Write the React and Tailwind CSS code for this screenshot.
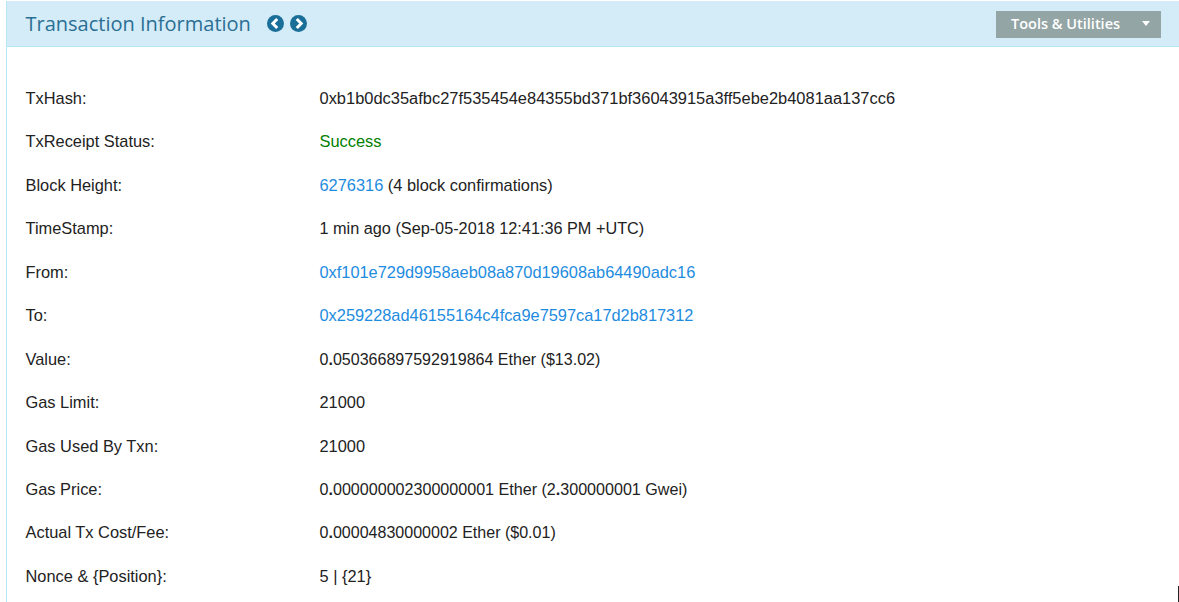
import React from 'react';

const ROWS = [
  { label: 'TxHash:', value: <span className="text-[16.45px]">0xb1b0dc35afbc27f535454e84355bd371bf36043915a3ff5ebe2b4081aa137cc6</span> },
  { label: 'TxReceipt Status:', value: <span className="text-[#008000]">Success</span> },
  { label: 'Block Height:', value: <><span className="text-[#1e8ce0]">6276316</span> (4 block confirmations)</> },
  { label: 'TimeStamp:', value: <span className="text-[16.25px]">1 min ago (Sep-05-2018 12:41:36 PM +UTC)</span> },
  { label: 'From:', value: <span className="text-[16.37px] text-[#1e8ce0]">0xf101e729d9958aeb08a870d19608ab64490adc16</span> },
  { label: 'To:', value: <span className="text-[16.37px] text-[#1e8ce0]">0x259228ad46155164c4fca9e7597ca17d2b817312</span> },
  { label: 'Value:', value: <span className="text-[16.05px]">0<b>.</b>050366897592919864 Ether ($13.02)</span> },
  { label: 'Gas Limit:', value: '21000' },
  { label: 'Gas Used By Txn:', value: '21000' },
  { label: 'Gas Price:', value: <span className="text-[16.1px]">0<b>.</b>000000002300000001 Ether (2<b>.</b>300000001 Gwei)</span> },
  { label: 'Actual Tx Cost/Fee:', value: <span className="text-[16.05px]">0<b>.</b>00004830000002 Ether ($0.01)</span> },
  { label: 'Nonce & {Position}:', value: '5 | {21}' },
];

function ArrowIcon({ dir }) {
  return (
    <svg width="17" height="17" viewBox="0 0 17 17">
      <circle cx="8.5" cy="8.5" r="8.5" fill="#1a6f99" />
      <path
        d={dir === 'left' ? 'M10.2 4 5.8 8.5l4.4 4.5' : 'M6.8 4l4.4 4.5L6.8 13'}
        fill="none"
        stroke="#ffffff"
        strokeWidth="3"
      />
    </svg>
  );
}

export default function App() {
  return (
    <div className="relative h-[602px] w-[1179px] overflow-hidden bg-white pt-px font-['Liberation_Sans',sans-serif]">
      <div className="h-full border-l border-[#b4e6f5] ml-[6px]">
        {/* Header */}
        <div className="flex h-[46px] items-center justify-between border-b border-[#b4e6f5] bg-[#d4ebf8] pl-[18.5px] pr-[18px]">
          <div className="flex items-center">
            <h1 className="font-['Open_Sans',sans-serif] text-[20px] leading-none text-[#2a6f94]">Transaction Information</h1>
            <div className="ml-[16.5px] flex gap-[6px]">
              <ArrowIcon dir="left" />
              <ArrowIcon dir="right" />
            </div>
          </div>
          <button className="mt-[1px] flex h-[27px] w-[165px] items-center justify-between bg-[#93a5a5] pb-px pl-[15px] pr-[11px] font-['Open_Sans',sans-serif] text-[14.5px] font-semibold text-white">
            Tools &amp; Utilities
            <span className="h-0 w-0 border-x-[4.5px] border-t-[5px] border-x-transparent border-t-white" />
          </button>
        </div>

        {/* Rows */}
        <div className="pl-[18.5px] pt-[29.6px]">
          {ROWS.map((row) => (
            <div key={row.label} className="flex h-[43.45px] items-center text-[16.4px] text-[#222222]">
              <div className="w-[294px]">{row.label}</div>
              <div>{row.value}</div>
            </div>
          ))}
        </div>
      </div>
      {/* sliver of scrollbar at the bottom right corner */}
      <div className="absolute bottom-0 right-0 h-[16px] w-px bg-[#222222]" />
    </div>
  );
}
